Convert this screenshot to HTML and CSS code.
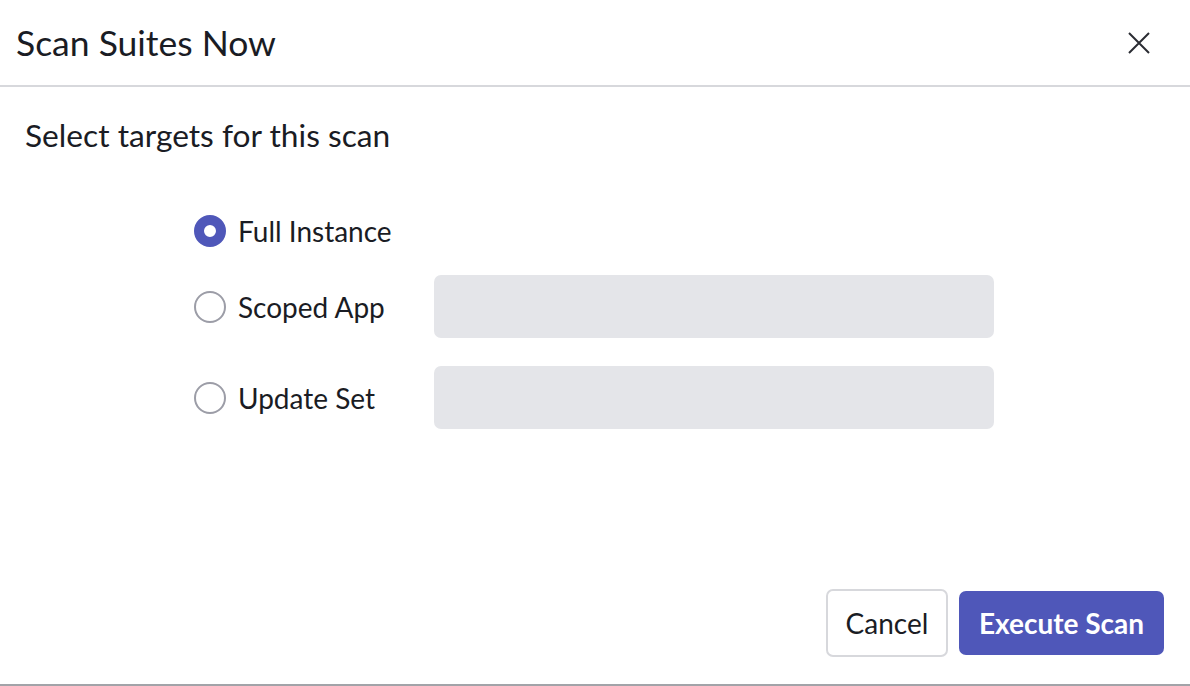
FILE: index.html
```html
<!DOCTYPE html>
<html lang="en">

<head>
    <meta charset="utf-8">
    <meta name="viewport" content="width=device-width, initial-scale=1">
    <title>Scan Suites Now</title>
    <link rel="stylesheet" href="styles.css">
</head>

<body>
    <div class="modal">
        <div class="modal-header">
            <h1>Scan Suites Now</h1>
            <button class="close-btn" aria-label="Close">
                <svg width="22" height="22" viewBox="0 0 22 22">
                    <path d="M1 1 L21 21 M21 1 L1 21" stroke="#2a2c33" stroke-width="2" fill="none" />
                </svg>
            </button>
        </div>

        <div class="modal-body">
            <div class="subtitle">Select targets for this scan</div>

            <div class="target-list">
                <label class="target">
                    <span class="radio checked"></span>
                    <span class="target-label">Full Instance</span>
                </label>
                <label class="target">
                    <span class="radio"></span>
                    <span class="target-label">Scoped App</span>
                    <span class="target-input"></span>
                </label>
                <label class="target">
                    <span class="radio"></span>
                    <span class="target-label">Update Set</span>
                    <span class="target-input"></span>
                </label>
            </div>
        </div>

        <div class="modal-footer">
            <button class="btn btn-cancel">Cancel</button>
            <button class="btn btn-primary">Execute Scan</button>
        </div>
    </div>
</body>

</html>
```

FILE: styles.css
```css
:root {
    --color-text: #1a1c24;
    --color-primary: #4f57b9;
    --color-border: #d7d8dc;
    --color-radio: #9c9da7;
    --color-input: #e4e5e9;
    --color-edge: #a2a3a8;
    --radius: 7px;
}

* {
    box-sizing: border-box;
}

body {
    margin: 0;
    font-family: Lato, 'Noto Sans', sans-serif;
    color: var(--color-text);
    background: #ffffff;
}

.modal {
    width: 1190px;
    height: 686px;
    display: flex;
    flex-direction: column;
    border-bottom: 2px solid var(--color-edge);
}

.modal-header {
    height: 87px;
    padding: 0 40px 0 16px;
    display: flex;
    align-items: center;
    justify-content: space-between;
    border-bottom: 2px solid var(--color-border);
}

.modal-header h1 {
    margin: 0;
    font-size: 35.5px;
    font-weight: 400;
    line-height: 40px;
}

.close-btn {
    background: none;
    border: none;
    padding: 0;
    width: 22px;
    height: 22px;
    cursor: pointer;
    display: flex;
}

.modal-body {
    padding: 31px 25px 0;
}

.subtitle {
    font-size: 31.7px;
    line-height: 34px;
}

.target-list {
    margin: 63px 0 0 169px;
    display: flex;
    flex-direction: column;
    gap: 28px;
}

.target {
    display: flex;
    align-items: center;
    cursor: pointer;
}

.radio {
    width: 32px;
    height: 32px;
    border-radius: 50%;
    border: 2px solid var(--color-radio);
    flex-shrink: 0;
}

.radio.checked {
    border: 10px solid var(--color-primary);
    background: #ffffff;
}

.target-label {
    width: 196px;
    margin-left: 12px;
    font-size: 28px;
    line-height: 32px;
}

.target-input {
    width: 560px;
    height: 63px;
    border-radius: var(--radius);
    background: var(--color-input);
}

.modal-footer {
    margin-top: auto;
    padding: 0 26px 27px 0;
    display: flex;
    justify-content: flex-end;
    align-items: center;
    gap: 11px;
}

.btn {
    font-family: inherit;
    font-size: 28px;
    border-radius: var(--radius);
    cursor: pointer;
}

.btn-cancel {
    width: 122px;
    height: 68px;
    background: #ffffff;
    color: var(--color-text);
    border: 2px solid var(--color-border);
}

.btn-primary {
    width: 205px;
    height: 64px;
    background: var(--color-primary);
    color: #ffffff;
    border: none;
    font-weight: 700;
}
```
